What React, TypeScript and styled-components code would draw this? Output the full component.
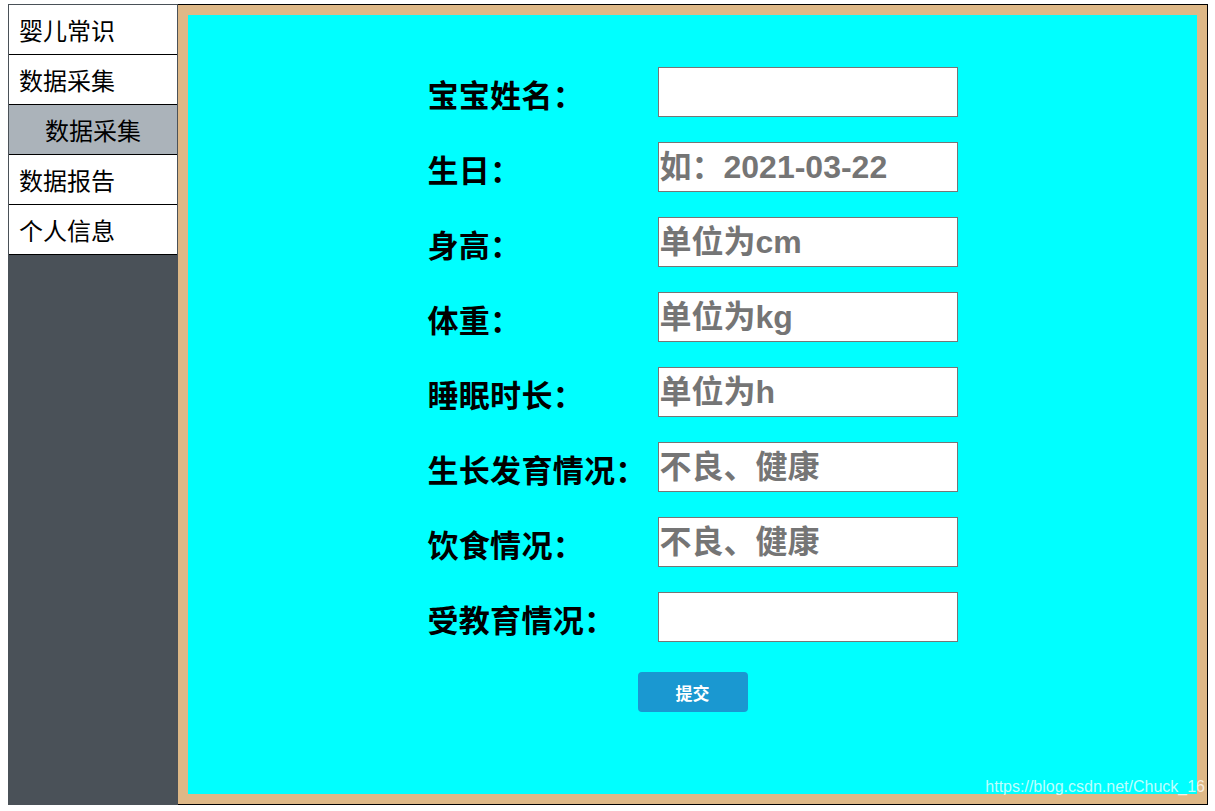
import React from 'react'
import styled, { createGlobalStyle } from 'styled-components'

const GlobalStyle = createGlobalStyle`
  html, body {
    margin: 0;
    padding: 0;
    background: #ffffff;
  }
  body {
    font-family: "Liberation Sans", Arial, "Noto Sans CJK SC", sans-serif;
  }
`

const Page = styled.div`
  display: flex;
  padding: 4px 0 0 8px;
  height: 801px;
  position: relative;
`

const Sidebar = styled.div`
  width: 170px;
  box-sizing: border-box;
  padding: 1px 1px 0 1px;
  background: #4a5158;
  display: flex;
  flex-direction: column;
`

const NavItem = styled.div<{ $sub?: boolean }>`
  height: 49px;
  border-bottom: 1px solid #000000;
  background: ${(p) => (p.$sub ? '#abb3ba' : '#ffffff')};
  padding-left: ${(p) => (p.$sub ? '36px' : '10px')};
  display: flex;
  align-items: center;
  font-size: 24px;
  color: #000000;
  font-family: "Noto Sans CJK SC", sans-serif;
`

const Main = styled.div`
  width: 1030px;
  box-sizing: border-box;
  border: 1px solid #000000;
  border-left: none;
  padding: 10px;
  background: #deb887;
`

const Panel = styled.div`
  height: 100%;
  background: #00ffff;
  display: flex;
  flex-direction: column;
  align-items: center;
  padding-top: 52px;
  box-sizing: border-box;
`

const Form = styled.form`
  display: flex;
  flex-direction: column;
  align-items: center;
  width: 530px;
`

const Row = styled.div`
  display: flex;
  align-items: center;
  width: 100%;
  height: 50px;
  margin-bottom: 25px;
`

const Label = styled.label`
  width: 230px;
  font-size: 31px;
  font-weight: bold;
  color: #000000;
  padding-top: 3px;
  letter-spacing: 0.3px;
  font-family: "Noto Sans CJK SC", sans-serif;
`

const Field = styled.input`
  width: 300px;
  height: 50px;
  box-sizing: border-box;
  border: 1px solid #767676;
  padding: 0 1px;
  background: #ffffff;
  font-size: 32px;
  font-weight: bold;
  font-family: "Liberation Sans", Arial, "Noto Sans CJK SC", sans-serif;
  outline: none;
  &::placeholder {
    color: #757575;
  }
`

const Submit = styled.button`
  margin-top: 5px;
  width: 110px;
  height: 40px;
  border: none;
  border-radius: 4px;
  background: #1a98d1;
  color: #ffffff;
  font-size: 17px;
  font-weight: bold;
  font-family: "Noto Sans CJK SC", sans-serif;
`

const Watermark = styled.div`
  position: absolute;
  right: 10px;
  top: 778px;
  font-size: 16px;
  color: rgba(255, 255, 255, 0.75);
  font-family: "Liberation Sans", Arial, sans-serif;
`

const fields = [
  { label: '宝宝姓名：', placeholder: '' },
  { label: '生日：', placeholder: '如：2021-03-22' },
  { label: '身高：', placeholder: '单位为cm' },
  { label: '体重：', placeholder: '单位为kg' },
  { label: '睡眠时长：', placeholder: '单位为h' },
  { label: '生长发育情况：', placeholder: '不良、健康' },
  { label: '饮食情况：', placeholder: '不良、健康' },
  { label: '受教育情况：', placeholder: '' },
]

const App: React.FC = () => {
  return (
    <>
      <GlobalStyle />
      <Page>
        <Sidebar>
          <NavItem>婴儿常识</NavItem>
          <NavItem>数据采集</NavItem>
          <NavItem $sub>数据采集</NavItem>
          <NavItem>数据报告</NavItem>
          <NavItem>个人信息</NavItem>
        </Sidebar>
        <Main>
          <Panel>
            <Form onSubmit={(e) => e.preventDefault()}>
              {fields.map((f, i) => (
                <Row key={i}>
                  <Label>{f.label}</Label>
                  <Field type="text" placeholder={f.placeholder} />
                </Row>
              ))}
              <Submit type="submit">提交</Submit>
            </Form>
          </Panel>
        </Main>
        <Watermark>https://blog.csdn.net/Chuck_16</Watermark>
      </Page>
    </>
  )
}

export default App
